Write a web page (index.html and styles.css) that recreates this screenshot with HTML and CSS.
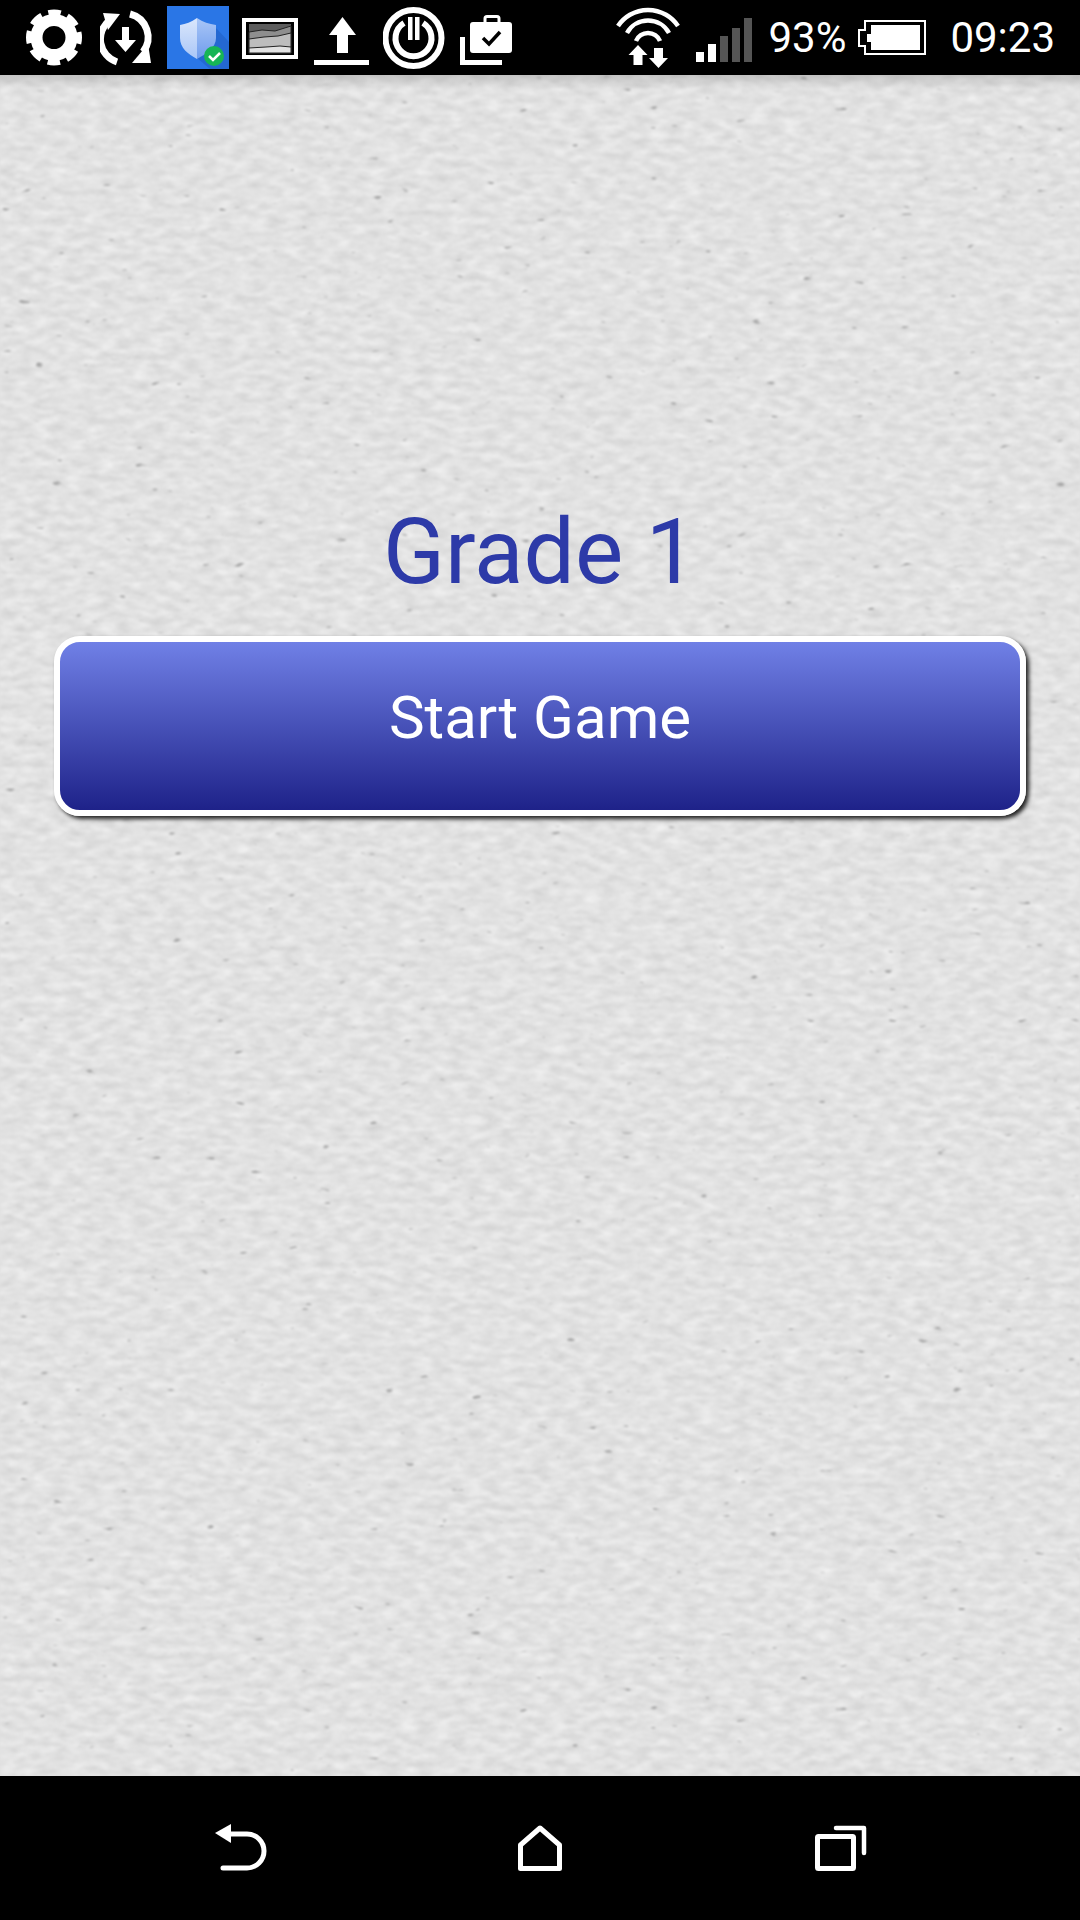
FILE: index.html
```html
<!DOCTYPE html>
<html lang="en">
<head>
    <meta charset="UTF-8">
    <meta name="viewport" content="width=device-width, initial-scale=1.0">
    <title>Grade 1</title>
    <link rel="stylesheet" href="styles.css">
</head>
<body>
    <header class="status-bar">
        <div class="status-left">
            <!-- settings -->
            <svg width="62" height="75" viewBox="26 0 62 75">
                <circle cx="54" cy="37.5" r="17.5" fill="none" stroke="#fff" stroke-width="12"/>
                <circle cx="54" cy="37.5" r="25" fill="none" stroke="#fff" stroke-width="6" stroke-dasharray="12.6 7" stroke-dashoffset="6.3"/>
            </svg>
            <!-- sync -->
            <svg width="55" height="75" viewBox="100 0 55 75">
                <path d="M117 62A24 24 0 0 1 110 20" fill="none" stroke="#fff" stroke-width="7"/>
                <path d="M130 14A24 24 0 0 1 143 52" fill="none" stroke="#fff" stroke-width="7"/>
                <polygon points="103,13 120,14 108,30" fill="#fff"/>
                <polygon points="151,63 132,63 148,44" fill="#fff"/>
                <path d="M122 27h7v13h7l-10.5 12-10.5-12h7z" fill="#fff"/>
            </svg>
            <!-- security app -->
            <svg width="62" height="75" viewBox="167 0 62 75">
                <defs>
                    <linearGradient id="shieldLeft" x1="0" y1="0" x2="0" y2="1">
                        <stop offset="0" stop-color="#dbe7fc"/>
                        <stop offset="1" stop-color="#a9c6f7"/>
                    </linearGradient>
                    <linearGradient id="shieldRight" x1="0" y1="0" x2="0" y2="1">
                        <stop offset="0" stop-color="#a9c6f7"/>
                        <stop offset="1" stop-color="#6f9cec"/>
                    </linearGradient>
                </defs>
                <rect x="167" y="6" width="62" height="63" fill="#2a76e6"/>
                <polygon points="216,28 229,42 229,69 210,69 197,58" fill="#2468d2"/>
                <path d="M197 18C191 22 186 24 180 25V38C180 48 188 54 197 59Z" fill="url(#shieldLeft)"/>
                <path d="M197 18C203 22 209 24 216 25V38C216 48 206 54 197 59Z" fill="url(#shieldRight)"/>
                <circle cx="214" cy="56" r="10" fill="#16b556"/>
                <path d="M209 56l4 4 7-7" fill="none" stroke="#fff" stroke-width="2.5"/>
            </svg>
            <!-- picture -->
            <svg width="61" height="75" viewBox="241 0 61 75">
                <rect x="242" y="18" width="56" height="41" fill="#fff"/>
                <rect x="246" y="22" width="48" height="33" fill="#000"/>
                <rect x="249" y="24" width="42" height="29" fill="#5c5c5c"/>
                <path d="M249 32L262 30 275 31 291 26V53H249Z" fill="#8e8e8e" stroke="#222"/>
                <path d="M249 39L264 37 278 36 291 33V53H249Z" fill="#bdbdbd" stroke="#222"/>
                <path d="M249 48L266 47 280 46 291 47V53H249Z" fill="#e2e2e2" stroke="#222"/>
            </svg>
            <!-- upload -->
            <svg width="57" height="75" viewBox="314 0 57 75">
                <path d="M342.5 17L356 35H348V53H337V35H329Z" fill="#fff"/>
                <rect x="314" y="60" width="55" height="5" fill="#fff"/>
            </svg>
            <!-- power -->
            <svg width="65" height="75" viewBox="383 0 65 75">
                <circle cx="413.5" cy="38" r="28" fill="none" stroke="#fff" stroke-width="6"/>
                <path d="M404 23A18 18 0 1 0 423 23" fill="none" stroke="#fff" stroke-width="6"/>
                <rect x="408" y="17" width="4.5" height="23" fill="#fff"/>
                <rect x="415" y="17" width="4.5" height="23" fill="#fff"/>
            </svg>
            <!-- tasks -->
            <svg width="52" height="75" viewBox="460 0 52 75">
                <path d="M462.5 37V62.5H502" fill="none" stroke="#fff" stroke-width="5"/>
                <rect x="470" y="22" width="42" height="31" rx="3" fill="#fff"/>
                <rect x="485" y="16.5" width="14" height="9" rx="2" fill="none" stroke="#fff" stroke-width="3"/>
                <path d="M483 38l6 6 11-12" fill="none" stroke="#000" stroke-width="3.5"/>
            </svg>
        </div>
        <div class="status-right">
            <!-- wifi -->
            <svg class="wifi" width="64" height="75" viewBox="616 0 64 75">
                <g fill="none" stroke="#fff" stroke-width="4.5">
                    <path d="M618 26A36 36 0 0 1 678 26"/>
                    <path d="M627 33A24 24 0 0 1 669 33"/>
                    <path d="M636 41A13 13 0 0 1 660 41"/>
                </g>
                <path d="M638 45L647.5 55H642.5V65H633.5V55H628.5Z" fill="#fff"/>
                <path d="M658.5 68L668 58H663V48H654V58H649Z" fill="#fff"/>
            </svg>
            <!-- signal -->
            <svg class="signal" width="56" height="75" viewBox="696 0 56 75">
                <rect x="696" y="52" width="8" height="10" fill="#fff"/>
                <rect x="708" y="44" width="8" height="18" fill="#fff"/>
                <rect x="720" y="36" width="8" height="26" fill="#555"/>
                <rect x="732" y="28" width="8" height="34" fill="#555"/>
                <rect x="744" y="18" width="8" height="44" fill="#555"/>
            </svg>
            <span class="battery-text">93%</span>
            <!-- battery -->
            <svg class="battery" width="68" height="75" viewBox="857 0 68 75">
                <path d="M864 21H924V54H864V46H858V30H864Z" fill="none" stroke="#fff" stroke-width="2"/>
                <path d="M870 25H919V50H870V42H866V34H870Z" fill="#fff"/>
            </svg>
            <span class="clock">09:23</span>
        </div>
    </header>

    <main class="game">
        <!-- paper texture -->
        <svg class="paper" width="1080" height="1701">
            <defs>
                <filter id="paperNoise" x="0" y="0" width="100%" height="100%" color-interpolation-filters="sRGB">
                    <feTurbulence type="fractalNoise" baseFrequency="0.06 0.14" numOctaves="5" seed="7" result="grain"/>
                    <feColorMatrix in="grain" type="matrix" values="0.15 0 0 0 0.81  0.15 0 0 0 0.81  0.15 0 0 0 0.81  0 0 0 0 1" result="light"/>
                    <feTurbulence type="fractalNoise" baseFrequency="0.06 0.16" numOctaves="2" seed="21" result="marks"/>
                    <feColorMatrix in="marks" type="matrix" values="0 0 0 0 0.65  0 0 0 0 0.65  0 0 0 0 0.65  10 0 0 0 -7.6" result="specks"/>
                    <feMerge>
                        <feMergeNode in="light"/>
                        <feMergeNode in="specks"/>
                    </feMerge>
                    <feGaussianBlur stdDeviation="1"/>
                </filter>
            </defs>
            <rect width="1080" height="1701" fill="#fff" filter="url(#paperNoise)"/>
        </svg>
        <div class="top-shade"></div>

        <h1 class="grade">Grade 1</h1>
        <button class="start-btn">Start Game</button>
    </main>

    <footer class="nav-bar">
        <!-- back -->
        <svg width="54" height="144" viewBox="214 1776 54 144">
            <path d="M228 1834H247A17 17 0 0 1 247 1868H223" fill="none" stroke="#fff" stroke-width="5" stroke-linecap="round"/>
            <polygon points="215,1833 231,1824 231,1843" fill="#fff"/>
        </svg>
        <!-- home -->
        <svg width="48" height="144" viewBox="516 1776 48 144">
            <path d="M540 1828L520.5 1845V1868.5H559.5V1845Z" fill="none" stroke="#fff" stroke-width="5" stroke-linejoin="round"/>
        </svg>
        <!-- recents -->
        <svg width="56" height="144" viewBox="812 1776 56 144">
            <rect x="817.5" y="1836.5" width="36" height="32" rx="1" fill="none" stroke="#fff" stroke-width="5"/>
            <path d="M836 1828H864V1853" fill="none" stroke="#fff" stroke-width="4.5" stroke-linecap="round" stroke-linejoin="round"/>
        </svg>
    </footer>
</body>
</html>
```

FILE: styles.css
```css
/* General page */
body {
    margin: 0;
    width: 1080px;
    height: 1920px;
    display: flex;
    flex-direction: column;
    background-color: #000;
    font-family: Roboto, sans-serif;
    overflow: hidden;
}

/* Status bar */
.status-bar {
    height: 75px;
    display: flex;
    justify-content: space-between;
    background-color: #000;
    color: #fff;
}

.status-left {
    display: flex;
    gap: 12px;
    padding-left: 26px;
}

.status-right {
    display: flex;
    align-items: center;
    padding-right: 25px;
    font-size: 42px;
}

.signal {
    margin-left: 16px;
}

.battery-text {
    margin-left: 16px;
}

.battery {
    margin-left: 12px;
}

.clock {
    margin-left: 24px;
}

/* Game area */
.game {
    position: relative;
    flex: 1;
    padding: 427px 54px 0;
    background-color: #e0e0e0;
}

.paper {
    position: absolute;
    top: 0;
    left: 0;
}

.top-shade {
    position: absolute;
    top: 0;
    left: 0;
    right: 0;
    height: 14px;
    background: linear-gradient(rgba(0, 0, 0, 0.14), rgba(0, 0, 0, 0));
}

.grade {
    position: relative;
    margin: 0 0 34px;
    font-size: 91px;
    font-weight: 400;
    line-height: 100px;
    text-align: center;
    color: #2d3aa8;
}

.start-btn {
    position: relative;
    display: block;
    box-sizing: border-box;
    width: 972px;
    height: 180px;
    padding: 0 0 18px;
    border: 6px solid #fff;
    border-radius: 26px;
    background: linear-gradient(#7080e6, #1e2289);
    box-shadow: 3px 3px 4px rgba(0, 0, 0, 0.85);
    font-family: Roboto, sans-serif;
    font-size: 60px;
    color: #fff;
}

/* Navigation bar */
.nav-bar {
    height: 144px;
    display: flex;
    justify-content: space-between;
    padding: 0 212px 0 214px;
    background-color: #000;
}
```
